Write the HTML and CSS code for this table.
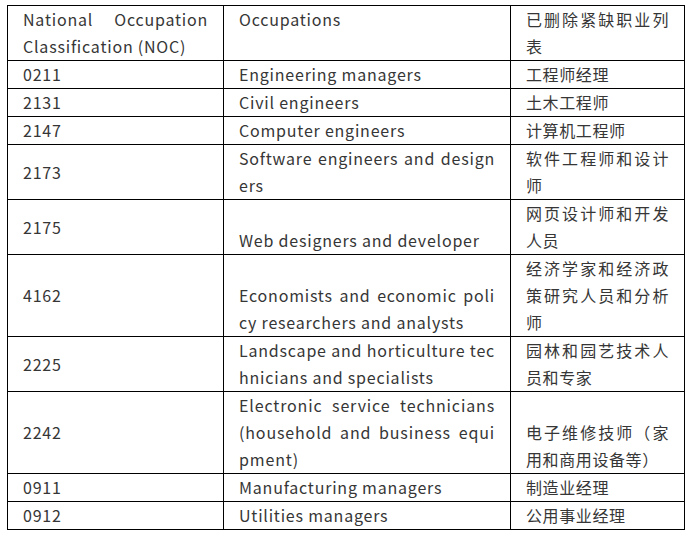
FILE: index.html
```html
<!DOCTYPE html>
<html lang="zh">
<head>
<meta charset="utf-8">
<title>NOC</title>
<link rel="stylesheet" href="styles.css">
</head>
<body>
<table class="noc">
  <colgroup>
    <col class="c1"><col class="c2"><col class="c3">
  </colgroup>
  <thead>
    <tr>
      <th>National Occupation Classification (NOC)</th>
      <th>Occupations</th>
      <th class="zh">已删除紧缺职业列表</th>
    </tr>
  </thead>
  <tbody>
    <tr><td>0211</td><td>Engineering managers</td><td class="zh">工程师经理</td></tr>
    <tr><td>2131</td><td>Civil engineers</td><td class="zh">土木工程师</td></tr>
    <tr><td>2147</td><td>Computer engineers</td><td class="zh">计算机工程师</td></tr>
    <tr><td>2173</td><td>Software engineers and designers</td><td class="zh">软件工程师和设计师</td></tr>
    <tr><td>2175</td><td>Web designers and developer</td><td class="zh">网页设计师和开发人员</td></tr>
    <tr><td>4162</td><td>Economists and economic policy researchers and analysts</td><td class="zh">经济学家和经济政策研究人员和分析师</td></tr>
    <tr><td>2225</td><td>Landscape and horticulture technicians and specialists</td><td class="zh">园林和园艺技术人员和专家</td></tr>
    <tr><td>2242</td><td class="wide">Electronic service technicians (household and business equipment)</td><td class="zh">电子维修技师（家用和商用设备等）</td></tr>
    <tr><td>0911</td><td>Manufacturing managers</td><td class="zh">制造业经理</td></tr>
    <tr><td>0912</td><td>Utilities managers</td><td class="zh">公用事业经理</td></tr>
  </tbody>
</table>
</body>
</html>
```
FILE: styles.css
```css
html, body {
  margin: 0;
  padding: 0;
  background: #ffffff;
}
body {
  padding: 5px 0 0 7px;
  font-family: "Noto Sans CJK SC", "Noto Sans", sans-serif;
  font-size: 16px;
  color: #363636;
}
.noc {
  border-collapse: collapse;
  table-layout: fixed;
  width: 677px;
}
.c1 { width: 216px; }
.c2 { width: 287px; }
.c3 { width: 174px; }
.noc th, .noc td {
  border: 1px solid #000;
  padding: 0 15px;
  line-height: 27px;
  font-weight: normal;
  text-align: justify;
  word-break: break-all;
  letter-spacing: 0.79px;
}
.noc th {
  vertical-align: top;
  word-break: normal;
}
.noc td {
  vertical-align: bottom;
}
.noc td:first-child {
  vertical-align: middle;
}
.noc td.wide {
  letter-spacing: 0.86px;
}
.noc .zh {
  letter-spacing: 0.6px;
  word-break: break-all;
}
```
